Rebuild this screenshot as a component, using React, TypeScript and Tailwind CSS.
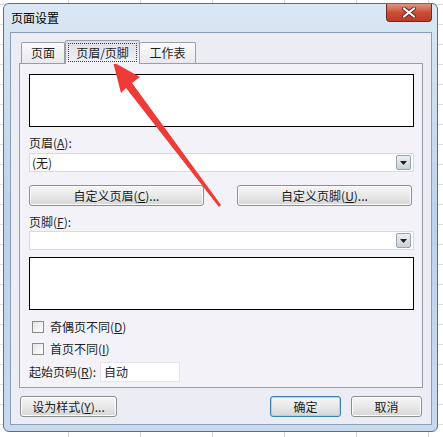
import React from 'react';

const FONT = "font-['Microsoft_YaHei','Noto_Sans_CJK_SC',sans-serif]";

// Win7 style push button
function PushButton({ children, className = '', primary = false }: { children: React.ReactNode; className?: string; primary?: boolean }) {
  return (
    <div
      className={`flex items-center justify-center rounded-[3px] border text-[12px] text-[#1b1b1b] bg-gradient-to-b from-[#f6f6f6] via-[#e9e9e9] to-[#d6d6d6] ${
        primary ? 'border-[#3c7fb1] shadow-[inset_0_0_0_1px_#a9d4f2]' : 'border-[#8e8f8f] shadow-[inset_0_0_0_1px_#fcfcfc]'
      } ${className}`}
    >
      {children}
    </div>
  );
}

function Combo({ text }: { text?: string }) {
  return (
    <div className="h-[19px] w-[385px] flex items-center bg-white border border-[#dadbe0] pl-[2px] pr-[2px]">
      <span className="flex-1 text-[12px] leading-none">{text}</span>
      <div className="w-[15px] h-[15px] flex items-center justify-center rounded-[2px] border border-[#9aa3ad] bg-gradient-to-b from-[#eef1f4] to-[#c9d0d8]">
        <svg width="7" height="4" viewBox="0 0 7 4">
          <path d="M0 0h7L3.5 4z" fill="#1e1e1e" />
        </svg>
      </div>
    </div>
  );
}

function CheckRow({ label, hot }: { label: string; hot: string }) {
  return (
    <div className="flex items-center h-[16px] pl-[3px]">
      <div className="w-[12px] h-[12px] border border-[#8b8b8b] bg-gradient-to-br from-[#e4e4e4] to-white" />
      <span className="ml-[6px] text-[12px] leading-none">
        {label}(<u>{hot}</u>)
      </span>
    </div>
  );
}

export default function App() {
  return (
    <div
      className={`relative w-[443px] h-[437px] overflow-hidden bg-white bg-[linear-gradient(to_right,#d6d6d6_1px,transparent_1px),linear-gradient(to_bottom,#dcdcdc_1px,transparent_1px)] bg-[size:72px_20px] bg-[position:68px_4px] text-[#1e1e1e] ${FONT}`}
    >
      {/* window frame */}
      <div className="ml-[3px] mt-[3px] w-[435px] h-[429px] rounded-[6px] border border-[#5f6e7e] bg-gradient-to-b from-[#dbe7f4] via-[#bcd2ea] to-[#c8daee] flex flex-col">
        {/* title bar */}
        <div className="h-[28px] flex items-start">
          <span className="ml-[7px] mt-[6px] text-[12px] leading-[16px] text-black">页面设置</span>
          <div className="ml-auto mr-[5px] w-[46px] h-[18px] rounded-b-[4px] border border-t-0 border-[#6a2b24] bg-gradient-to-b from-[#e09482] via-[#cc4d36] to-[#bd3a25] flex items-center justify-center">
            <svg width="14" height="11" viewBox="0 0 14 11">
              <path d="M2 1.5l10 8M12 1.5l-10 8" stroke="#5a2a24" strokeWidth="4" strokeLinecap="round" />
              <path d="M2 1.5l10 8M12 1.5l-10 8" stroke="#ffffff" strokeWidth="2.2" strokeLinecap="round" />
            </svg>
          </div>
        </div>

        {/* dialog body */}
        <div className="ml-[6px] mr-[5px] mb-[6px] flex-1 border border-[#8a9db5] bg-[#ececf5] flex flex-col">
          {/* tabs */}
          <div className="mt-[7px] h-[23px] flex items-end pl-[10px]">
            <div className="w-[44px] h-[21px] flex items-center justify-center border border-b-0 border-[#9d9da6] rounded-t-[2px] bg-gradient-to-b from-[#fbfbfb] to-[#e8e8ee] text-[12px]">
              页面
            </div>
            <div className="relative z-10 -mb-px w-[75px] h-[24px] border border-b-0 border-[#9d9da6] rounded-t-[2px] bg-gradient-to-b from-[#dcdde6] to-[#f2f2f8] p-[2px]">
              <div className="h-full border border-dotted border-[#444] flex items-center justify-center text-[12px]">
                页眉/页脚
              </div>
            </div>
            <div className="w-[56px] h-[21px] flex items-center justify-center border border-b-0 border-l-0 border-[#9d9da6] rounded-t-[2px] bg-gradient-to-b from-[#fbfbfb] to-[#e8e8ee] text-[12px]">
              工作表
            </div>
          </div>

          {/* tab panel */}
          <div className="ml-[8px] mr-[8px] border border-[#9d9da6] bg-[#f2f2f8] pl-[9px] pr-[8px] pb-[5px] flex flex-col">
            <div className="mt-[10px] h-[53px] w-[385px] bg-white border border-black" />

            <div className="mt-[8px] h-[16px] text-[12px] leading-[16px]">
              页眉(<u>A</u>):
            </div>
            <div className="mt-[2px]">
              <Combo text="(无)" />
            </div>

            <div className="mt-[13px] flex gap-[33px]">
              <PushButton className="w-[175px] h-[21px]">
                自定义页眉(<u>C</u>)...
              </PushButton>
              <PushButton className="w-[175px] h-[21px]">
                自定义页脚(<u>U</u>)...
              </PushButton>
            </div>

            <div className="mt-[8px] h-[16px] text-[12px] leading-[16px]">
              页脚(<u>F</u>):
            </div>
            <div className="mt-[1px]">
              <Combo />
            </div>

            <div className="mt-[7px] h-[53px] w-[385px] bg-white border border-black" />

            <div className="mt-[9px]">
              <CheckRow label="奇偶页不同" hot="D" />
            </div>
            <div className="mt-[6px]">
              <CheckRow label="首页不同" hot="I" />
            </div>

            <div className="mt-[5px] h-[20px] flex items-center">
              <span className="text-[12px] leading-none">
                起始页码(<u>R</u>):
              </span>
              <div className="ml-[4px] w-[80px] h-[20px] bg-white border border-[#e3e3ea] flex items-center pl-[3px] text-[12px]">
                自动
              </div>
            </div>
          </div>

          {/* bottom buttons */}
          <div className="mt-[8px] flex items-center pl-[9px] pr-[9px]">
            <PushButton className="w-[97px] h-[21px]">
              设为样式(<u>Y</u>)...
            </PushButton>
            <PushButton primary className="ml-auto w-[71px] h-[21px]">
              确定
            </PushButton>
            <PushButton className="ml-[10px] w-[71px] h-[21px]">
              取消
            </PushButton>
          </div>
        </div>
      </div>

      {/* red annotation arrow */}
      <svg className="absolute left-0 top-0 pointer-events-none" width="443" height="437" viewBox="0 0 443 437">
        <polygon points="113,62 140,77 132,83 221,205 219,207 126,88 121,93" fill="#ee3b37" />
      </svg>
    </div>
  );
}
